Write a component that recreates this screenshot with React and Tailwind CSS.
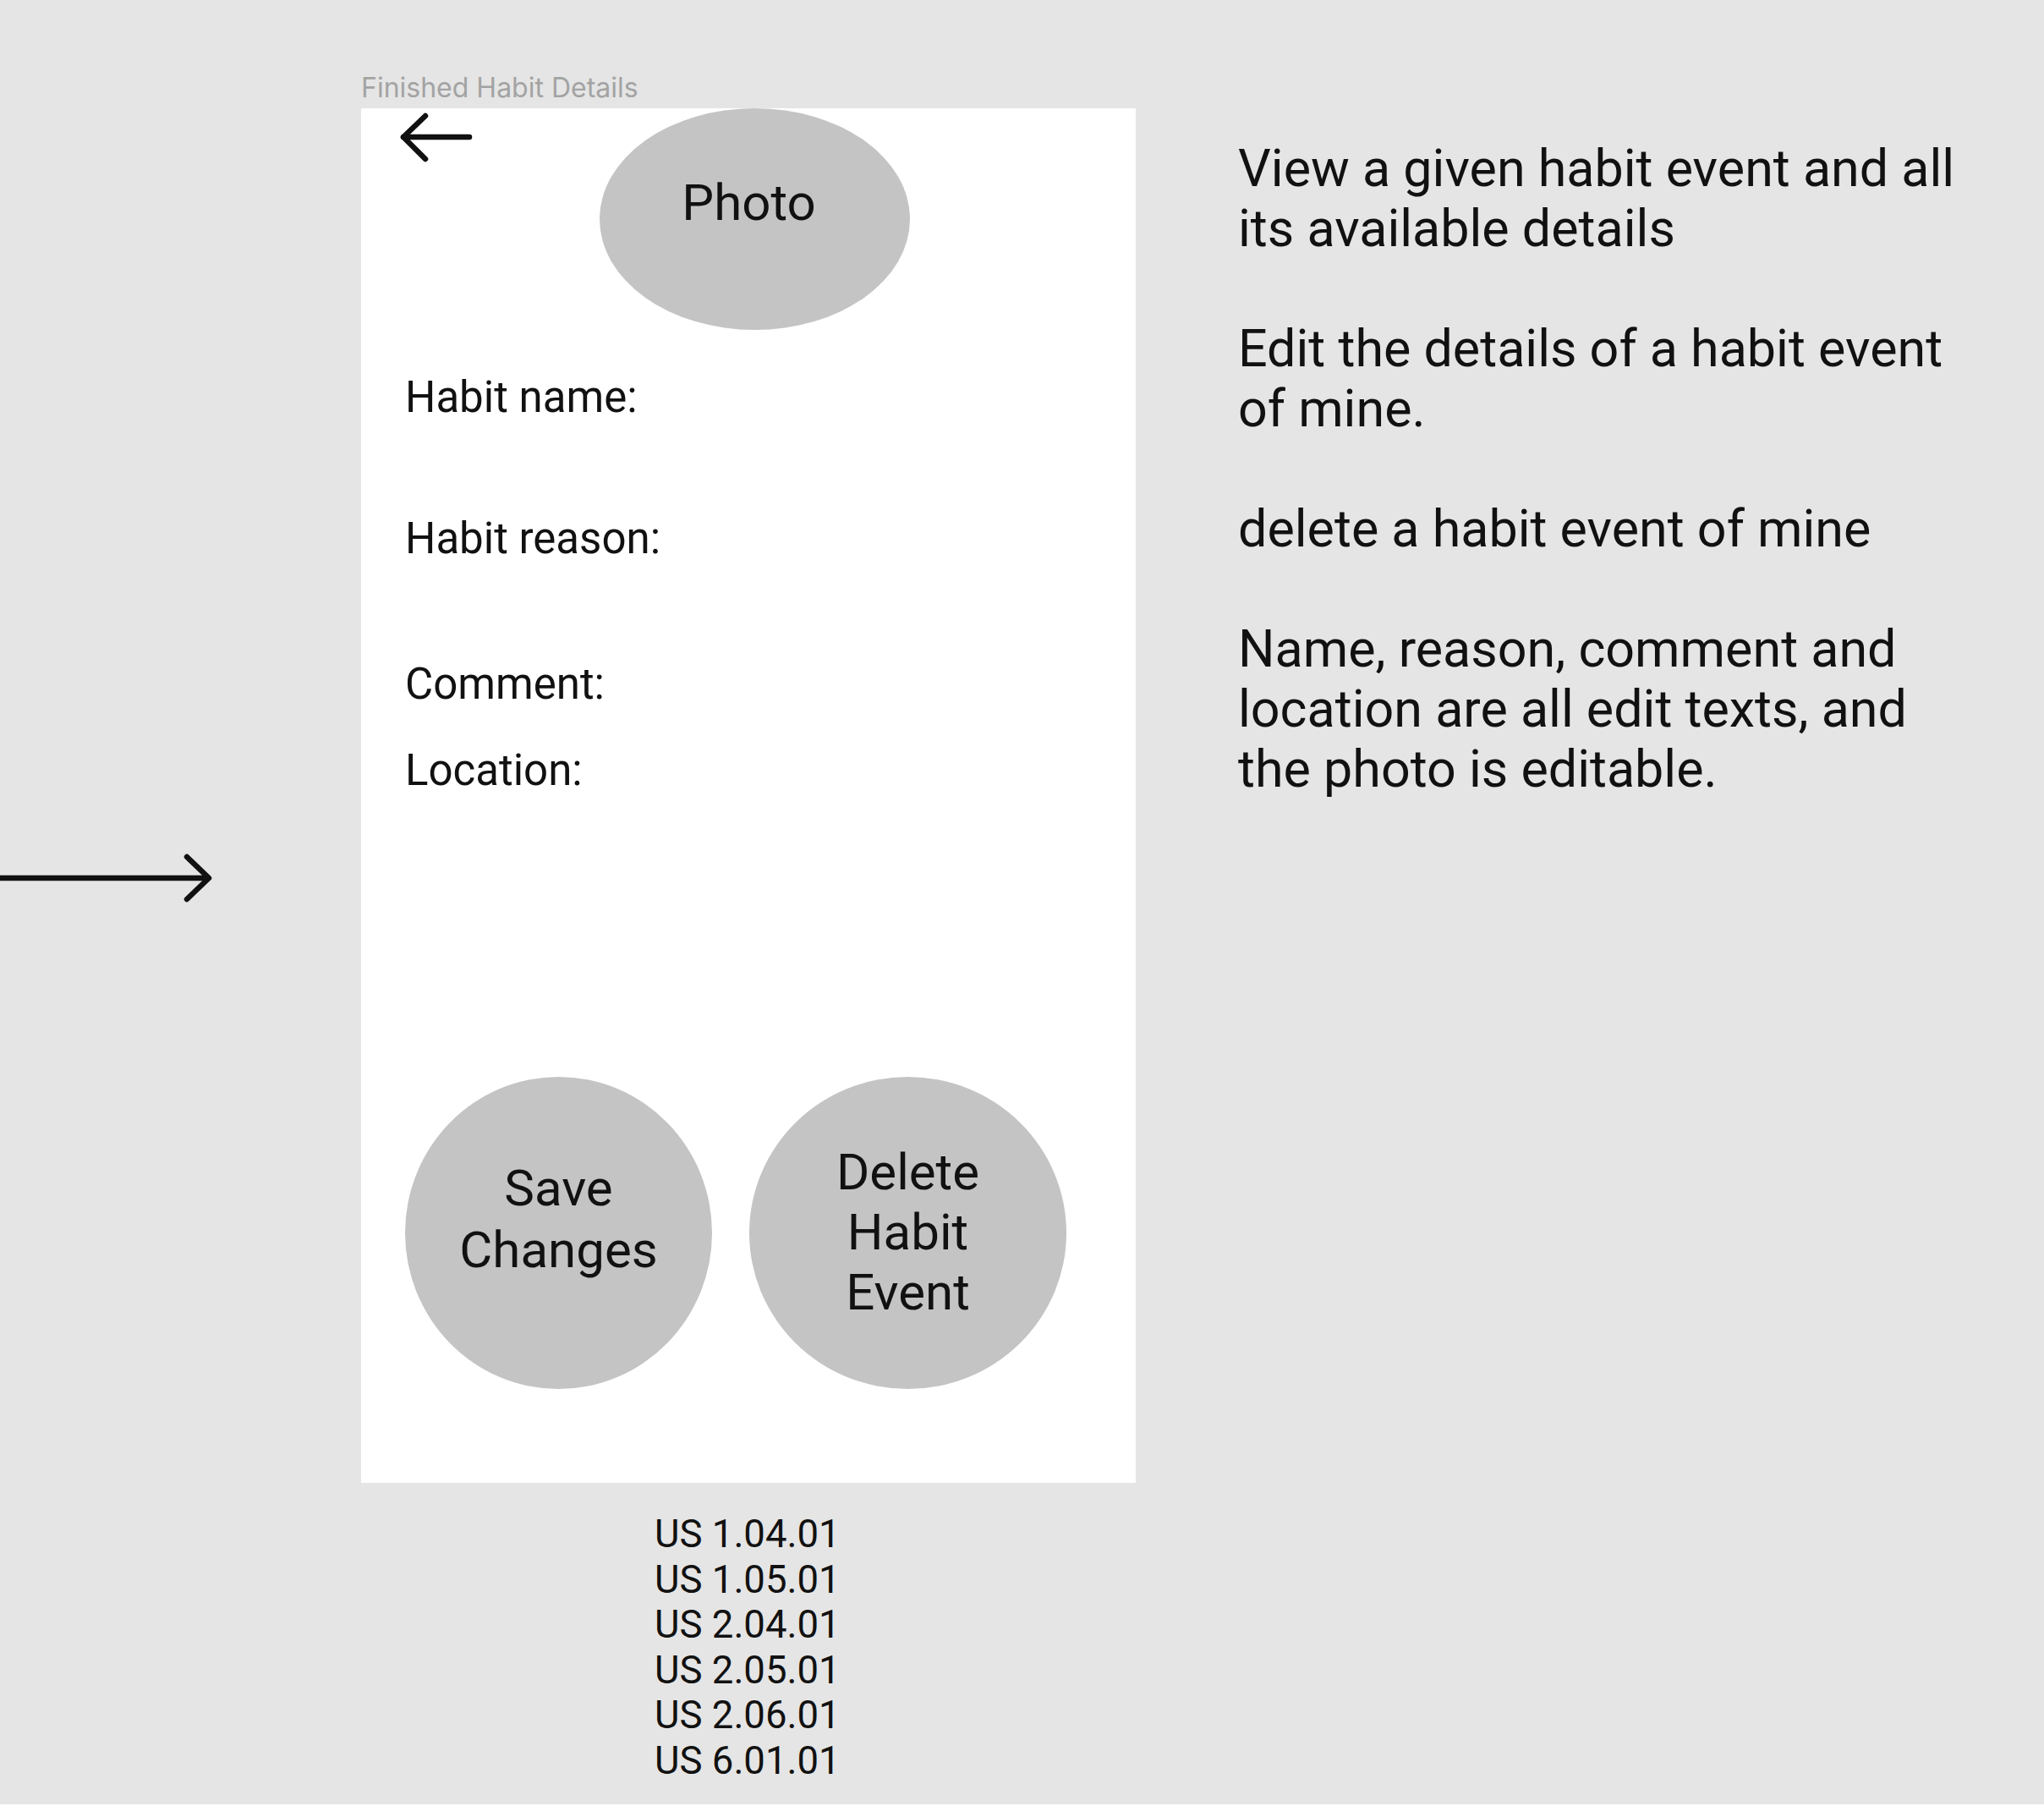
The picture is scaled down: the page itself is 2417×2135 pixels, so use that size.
import React from "react";

const roboto = { fontFamily: "Roboto, 'Liberation Sans', sans-serif" };

const fields = [
    { label: "Habit name:", mt: "mt-[50px]" },
    { label: "Habit reason:", mt: "mt-[107px]" },
    { label: "Comment:", mt: "mt-[112px]" },
    { label: "Location:", mt: "mt-[42px]" }
];

const stories = ["US 1.04.01", "US 1.05.01", "US 2.04.01", "US 2.05.01", "US 2.06.01", "US 6.01.01"];

const notes = [
    ["View a given habit event and all", "its available details"],
    ["Edit the details of a habit event", "of mine."],
    ["delete a habit event of mine"],
    ["Name, reason, comment and", "location are all edit texts, and", "the photo is editable."]
];

const BackArrow = () => (
    <svg width="88" height="64" viewBox="0 0 88 64" fill="none" className="mt-[4px] ml-[45px] shrink-0">
        <path d="M5 30 H83" stroke="#111" strokeWidth="6.5" strokeLinecap="round" />
        <path d="M31 5 L5 30 L31 56" stroke="#111" strokeWidth="6.5" strokeLinecap="round" strokeLinejoin="round" />
    </svg>
);

export default function App() {
    return (
        <div className="w-[2417px] h-[2135px] bg-[#e5e5e5] flex flex-col overflow-hidden" style={roboto}>
            <div className="flex flex-1">
                {/* flow arrow from previous screen */}
                <div className="w-[427px] pt-[1008px] shrink-0">
                    <svg width="252" height="60" viewBox="0 0 252 60" fill="none">
                        <path d="M0 30 H246" stroke="#111" strokeWidth="6.5" />
                        <path d="M221 5 L247 30 L221 55" stroke="#111" strokeWidth="6.5" strokeLinecap="round" strokeLinejoin="round" />
                    </svg>
                </div>

                <div className="w-[916px] flex flex-col shrink-0">
                    <div className="h-[128px] flex items-end pb-[5px]">
                        <span className="text-[32px] leading-[38px] text-[#a3a3a3]" style={{ fontFamily: "Inter, 'Noto Sans', sans-serif" }}>
                            Finished Habit Details
                        </span>
                    </div>

                    {/* phone frame */}
                    <div className="h-[1625px] bg-white flex flex-col">
                        <div className="flex items-start">
                            <BackArrow />
                            <div className="ml-[149px] w-[367px] h-[262px] rounded-[50%] bg-[#c4c4c4] flex items-center justify-center pb-[38px] pr-[14px]">
                                <span className="text-[60px] leading-[70px] text-[#111]">Photo</span>
                            </div>
                        </div>

                        <div className="pl-[52px] flex flex-col">
                            {fields.map(f => (
                                <div key={f.label} className={`${f.mt} text-[51px] leading-[60px] text-[#111]`}>
                                    {f.label}
                                </div>
                            ))}
                        </div>

                        <div className="mt-[332px] pl-[52px] flex gap-[44px]">
                            <div className="w-[363px] h-[369px] rounded-[50%] bg-[#c4c4c4] flex items-center justify-center pb-[34px]">
                                <span className="text-[60px] leading-[73px] text-center text-[#111]">Save<br />Changes</span>
                            </div>
                            <div className="w-[375px] h-[369px] rounded-[50%] bg-[#c4c4c4] flex items-center justify-center pb-[2px]">
                                <span className="text-[60px] leading-[71px] text-center text-[#111]">Delete<br />Habit<br />Event</span>
                            </div>
                        </div>
                    </div>

                    <div className="mt-[34px] pl-[347px] flex flex-col text-[45.5px] leading-[53.5px] text-[#111]">
                        {stories.map(s => <span key={s}>{s}</span>)}
                    </div>
                </div>

                {/* notes */}
                <div className="pl-[121px] pt-[164px] flex flex-col gap-[71px] text-[61px] leading-[71px] text-[#111]">
                    {notes.map((p, i) => (
                        <div key={i} className="flex flex-col">
                            {p.map(line => <span key={line} className="whitespace-nowrap">{line}</span>)}
                        </div>
                    ))}
                </div>
            </div>
            <div className="h-[2px] bg-white shrink-0" />
        </div>
    );
}
